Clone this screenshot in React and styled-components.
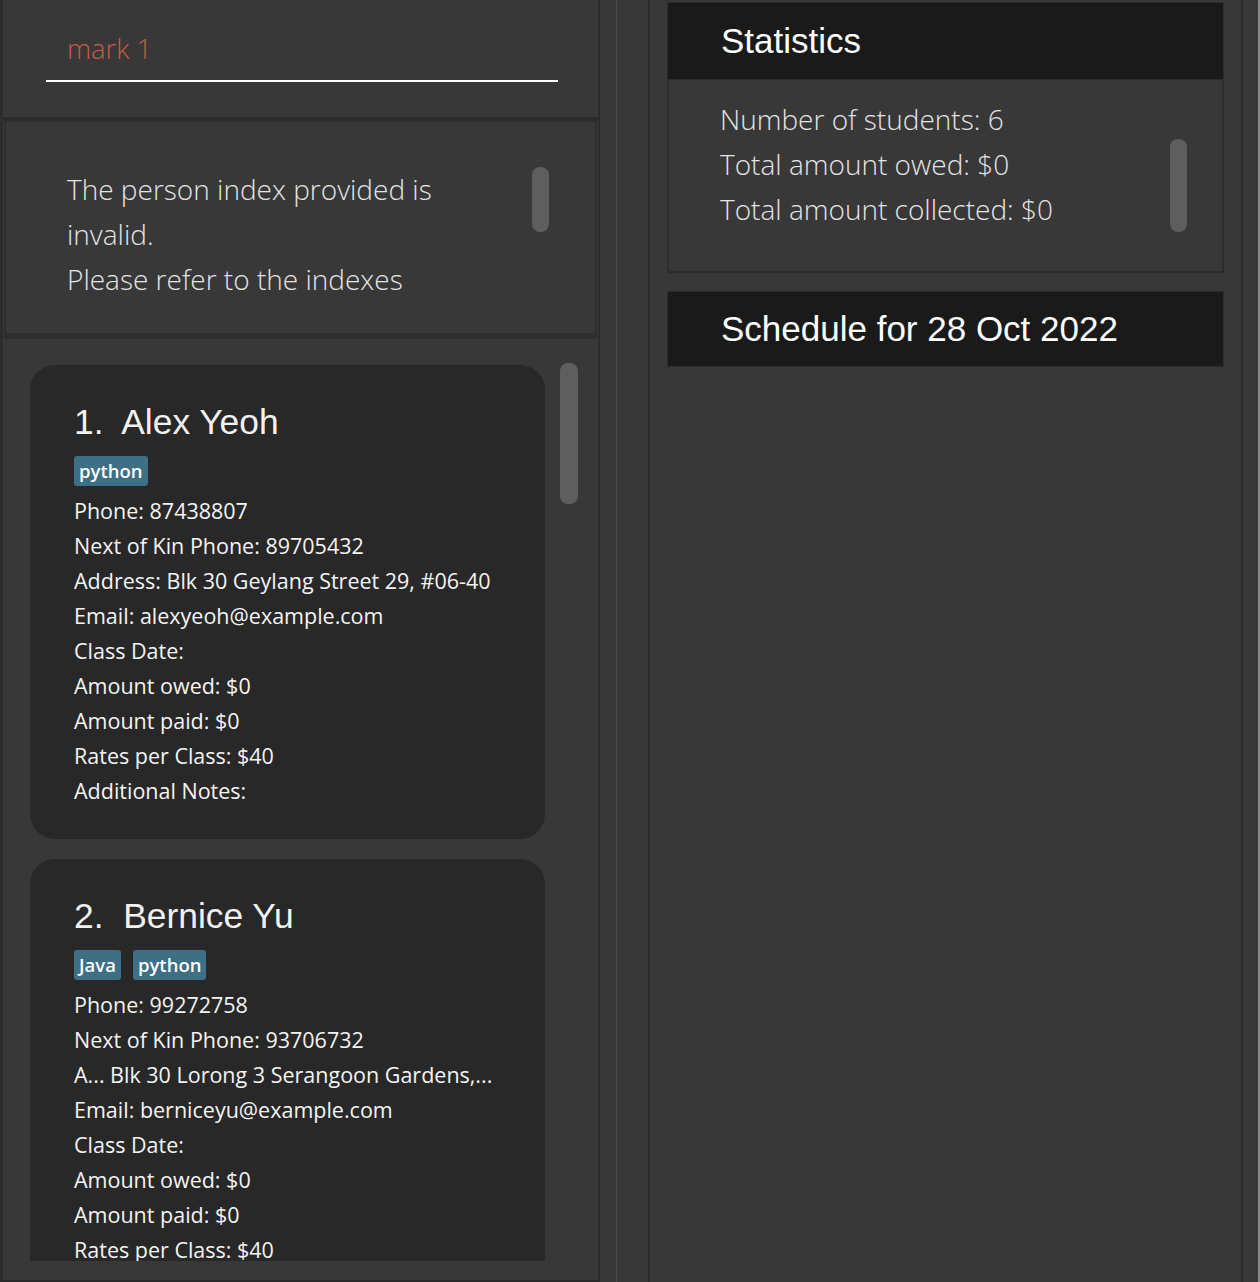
import React from 'react';
import styled, { createGlobalStyle } from 'styled-components';

const TITLE_FONT = "'Liberation Sans', Arial, sans-serif";
const BODY_FONT = "'Open Sans', 'Noto Sans', sans-serif";

const GlobalStyle = createGlobalStyle`
  html, body {
    margin: 0;
    padding: 0;
    background: #383838;
    overflow: hidden;
  }
  * { box-sizing: border-box; }
`;

const Window = styled.div`
  display: flex;
  width: 1260px;
  height: 1282px;
  background: #383838;
  border-right: 2px solid #8a8a8a;
`;

/* left side: command box, result display, person list */
const LeftPane = styled.div`
  display: flex;
  flex-direction: column;
  width: 600px;
  height: 100%;
  border-left: 3px solid #2d2d2d;
  border-right: 2px solid #2b2b2b;
  border-bottom: 2px solid #2b2b2b;
`;

const CommandBox = styled.div`
  height: 120px;
  padding: 28px 40px 0 43px;
  border-bottom: 3px solid #2b2b2b;
`;

const CommandInput = styled.input`
  display: block;
  width: 512px;
  height: 54px;
  margin: 0;
  padding: 0 0 12px 21px;
  border: none;
  border-bottom: 2px solid #ffffff;
  background: transparent;
  outline: none;
  color: #c85a48;
  font-family: ${BODY_FONT};
  font-weight: 300;
  font-size: 27.3px;
`;

const ResultBox = styled.div`
  display: flex;
  align-items: flex-start;
  height: 219px;
  margin: 0 1px;
  padding: 45px 46px 0 61px;
  border: 2px solid #2e2e2e;
  border-bottom-width: 6px;
`;

const LightText = styled.div`
  flex: 1;
  color: #e4e4e4;
  font-family: ${BODY_FONT};
  font-weight: 300;
  font-size: 28px;
  line-height: 45px;
  white-space: nowrap;
`;

const Thumb = styled.div`
  flex: none;
  width: ${p => p.$w || 17}px;
  height: ${p => p.$h}px;
  margin-top: ${p => p.$top || 0}px;
  margin-left: ${p => p.$left || 0}px;
  border-radius: 8px;
  background: #5e5e5e;
`;

const ListPanel = styled.div`
  flex: 1;
  padding: 24px 20px 19px 27px;
`;

const ListViewport = styled.div`
  display: flex;
  align-items: flex-start;
  height: 898px;
  overflow: hidden;
`;

const CardColumn = styled.div`
  display: flex;
  flex-direction: column;
  gap: 20px;
  width: 515px;
  margin-top: 2px;
  flex: none;
`;

const Card = styled.div`
  background: #282828;
  border-radius: 25px;
  padding: 35px 20px 31px 44px;
`;

const Name = styled.div`
  color: #f2f2f2;
  font-family: ${TITLE_FONT};
  font-size: 35.4px;
  line-height: 44px;
  white-space: pre;
`;

const Tags = styled.div`
  display: flex;
  gap: 12px;
  margin-top: 12px;
`;

const Tag = styled.span`
  height: 30px;
  padding: 0 5px;
  border-radius: 3px;
  background: #3d7085;
  color: #ffffff;
  font-family: ${BODY_FONT};
  font-weight: 600;
  font-size: 18.5px;
  line-height: 30px;
`;

const Details = styled.div`
  margin-top: 7px;
`;

const Detail = styled.div`
  color: #f4f4f4;
  font-family: ${BODY_FONT};
  font-size: 21.5px;
  line-height: 35px;
  white-space: nowrap;
`;

/* split pane divider */
const Divider = styled.div`
  width: 50px;
  height: 100%;
  padding-left: 16px;
  border-right: 2px solid #2b2b2b;
`;

const DividerLine = styled.div`
  width: 1px;
  height: 100%;
  background: #4a4a4a;
`;

/* right side: statistics and schedule */
const RightPane = styled.div`
  display: flex;
  flex-direction: column;
  width: 593px;
  height: 100%;
  padding: 2px 17px 0;
  border-right: 2px solid #2b2b2b;
`;

const Gutter = styled.div`
  width: 15px;
`;

const PanelHeader = styled.div`
  display: flex;
  align-items: center;
  height: ${p => p.$h}px;
  margin-top: ${p => p.$top || 0}px;
  padding-left: 53px;
  background: #1a1a1a;
  border: 1px solid #2c2c2c;
  color: #ffffff;
  font-family: ${TITLE_FONT};
  font-size: 35px;
`;

const StatsBody = styled.div`
  display: flex;
  align-items: flex-start;
  height: 193px;
  padding: 16.5px 35px 0 51px;
  border: 2px solid #2c2c2c;
  border-top: none;
`;

const persons = [
  {
    name: 'Alex Yeoh',
    tags: ['python'],
    lines: [
      'Phone: 87438807',
      'Next of Kin Phone: 89705432',
      'Address: Blk 30 Geylang Street 29, #06-40',
      'Email: alexyeoh@example.com',
      'Class Date:',
      'Amount owed: $0',
      'Amount paid: $0',
      'Rates per Class: $40',
      'Additional Notes:',
    ],
  },
  {
    name: 'Bernice Yu',
    tags: ['Java', 'python'],
    lines: [
      'Phone: 99272758',
      'Next of Kin Phone: 93706732',
      'A... Blk 30 Lorong 3 Serangoon Gardens,...',
      'Email: berniceyu@example.com',
      'Class Date:',
      'Amount owed: $0',
      'Amount paid: $0',
      'Rates per Class: $40',
      'Additional Notes:',
    ],
  },
];

const PersonCard = ({ index, person }) => (
  <Card>
    <Name>{`${index}.  ${person.name}`}</Name>
    <Tags>
      {person.tags.map(t => <Tag key={t}>{t}</Tag>)}
    </Tags>
    <Details>
      {person.lines.map((l, i) => <Detail key={i}>{l}</Detail>)}
    </Details>
  </Card>
);

const App = () => {
  return (
    <>
      <GlobalStyle />
      <Window>
        <LeftPane>
          <CommandBox>
            <CommandInput defaultValue="mark 1" spellCheck={false} />
          </CommandBox>
          <ResultBox>
            <LightText>
              <div>The person index provided is</div>
              <div>invalid.</div>
              <div>Please refer to the indexes</div>
            </LightText>
            <Thumb $h={65} />
          </ResultBox>
          <ListPanel>
            <ListViewport>
              <CardColumn>
                {persons.map((p, i) => <PersonCard key={p.name} index={i + 1} person={p} />)}
              </CardColumn>
              <Thumb $w={18} $h={141} $left={15} />
            </ListViewport>
          </ListPanel>
        </LeftPane>

        <Divider>
          <DividerLine />
        </Divider>

        <RightPane>
          <PanelHeader $h={78}>Statistics</PanelHeader>
          <StatsBody>
            <LightText>
              <div>Number of students: 6</div>
              <div>Total amount owed: $0</div>
              <div>Total amount collected: $0</div>
            </LightText>
            <Thumb $h={93} $top={42.5} />
          </StatsBody>
          <PanelHeader $h={76} $top={18}>Schedule for 28 Oct 2022</PanelHeader>
        </RightPane>
        <Gutter />
      </Window>
    </>
  );
};

export default App;
